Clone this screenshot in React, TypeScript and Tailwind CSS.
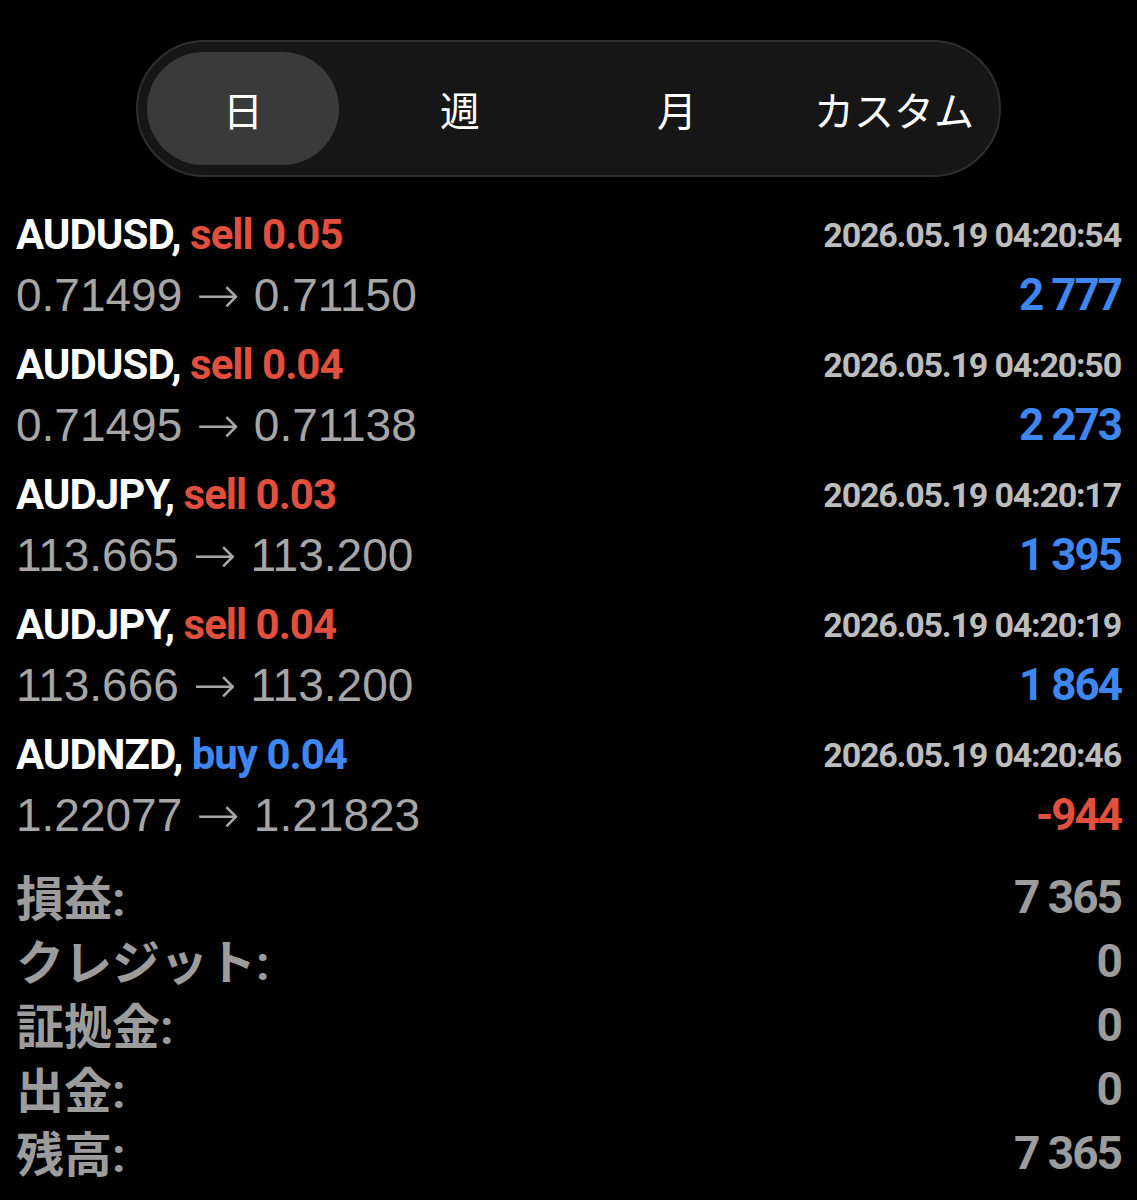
import React from 'react';

type Deal = {
    symbol: string;
    side: 'sell' | 'buy';
    volume: string;
    open: string;
    close: string;
    time: string;
    profit: string;
};

const deals: Deal[] = [
    { symbol: 'AUDUSD', side: 'sell', volume: '0.05', open: '0.71499', close: '0.71150', time: '2026.05.19 04:20:54', profit: '2 777' },
    { symbol: 'AUDUSD', side: 'sell', volume: '0.04', open: '0.71495', close: '0.71138', time: '2026.05.19 04:20:50', profit: '2 273' },
    { symbol: 'AUDJPY', side: 'sell', volume: '0.03', open: '113.665', close: '113.200', time: '2026.05.19 04:20:17', profit: '1 395' },
    { symbol: 'AUDJPY', side: 'sell', volume: '0.04', open: '113.666', close: '113.200', time: '2026.05.19 04:20:19', profit: '1 864' },
    { symbol: 'AUDNZD', side: 'buy', volume: '0.04', open: '1.22077', close: '1.21823', time: '2026.05.19 04:20:46', profit: '-944' },
];

const summary = [
    { label: '損益', value: '7 365' },
    { label: 'クレジット', value: '0' },
    { label: '証拠金', value: '0' },
    { label: '出金', value: '0' },
    { label: '残高', value: '7 365' },
];

const tabs = ['日', '週', '月', 'カスタム'];

const boldFont = "font-['Roboto','Liberation_Sans',sans-serif] font-bold";
const plainFont = "font-['Liberation_Sans',Arial,sans-serif] font-normal";
const cjkFont = "font-['Noto_Sans_CJK_JP',sans-serif]";

const Segmented: React.FC = () => (
    <div className="mx-auto w-[865px] h-[137px] rounded-full bg-[#161616] border-2 border-[#2e2e2e] p-[9px] flex justify-between items-center">
        {tabs.map((t, i) => (
            <div
                key={t}
                className={`w-[192px] h-[113px] rounded-full flex items-center justify-center text-[40px] text-white ${cjkFont} ${i === 0 ? 'bg-[#3a3a3a]' : ''}`}
            >
                {t}
            </div>
        ))}
    </div>
);

const DealRow: React.FC<{ deal: Deal }> = ({ deal }) => {
    const negative = deal.profit.startsWith('-');
    return (
        <div className="pb-[10px]">
            <div className="h-[60px] flex items-center justify-between">
                <div className={`${boldFont} text-[42px] tracking-[-1px] leading-none`}>
                    <span className="text-white">{deal.symbol}, </span>
                    <span className={deal.side === 'sell' ? 'text-[#e2503d]' : 'text-[#3e86f2]'}>
                        {deal.side} {deal.volume}
                    </span>
                </div>
                <div className={`${boldFont} text-[34px] tracking-[-1.2px] leading-none text-[#bdbdbd]`}>{deal.time}</div>
            </div>
            <div className="h-[60px] flex items-center justify-between">
                <div className={`${plainFont} text-[46px] leading-none text-[#a6a6a6] flex items-center`}>
                    <span>{deal.open}</span>
                    <span className="font-['DejaVu_Sans',sans-serif] font-light text-[52px] mx-[14px]">→</span>
                    <span>{deal.close}</span>
                </div>
                <div className={`${boldFont} text-[44px] tracking-[-2px] leading-none ${negative ? 'text-[#e2503d]' : 'text-[#3e86f2]'}`}>
                    {deal.profit}
                </div>
            </div>
        </div>
    );
};

export default function App() {
    return (
        <div className="w-[1137px] h-[1200px] bg-black overflow-hidden pt-[40px] px-[16px]">
            <Segmented />
            <div className="mt-[28px]">
                {deals.map((d, i) => (
                    <DealRow key={i} deal={d} />
                ))}
            </div>
            <div className="mt-[10px]">
                {summary.map((s) => (
                    <div key={s.label} className="h-[64px] flex items-center justify-between text-[#9c9c9c]">
                        <div className={`${cjkFont} font-bold text-[48px] leading-none`}>
                            {s.label}
                            <span className={boldFont}>:</span>
                        </div>
                        <div className={`${boldFont} text-[46px] tracking-[-2px] leading-none`}>{s.value}</div>
                    </div>
                ))}
            </div>
        </div>
    );
}
